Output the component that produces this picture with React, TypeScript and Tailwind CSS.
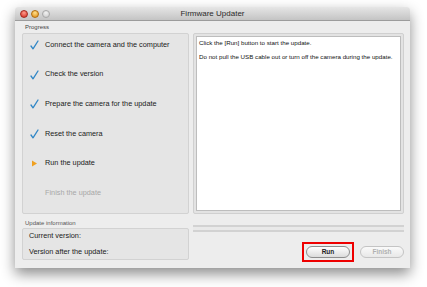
import React from 'react';

const steps = [
  { label: 'Connect the camera and the computer', state: 'done' },
  { label: 'Check the version', state: 'done' },
  { label: 'Prepare the camera for the update', state: 'done' },
  { label: 'Reset the camera', state: 'done' },
  { label: 'Run the update', state: 'current' },
  { label: 'Finish the update', state: 'pending' },
];

function Check() {
  return (
    <svg width="9" height="10" viewBox="0 0 9 10">
      <path d="M1 6 L3 8.8 L8 1" fill="none" stroke="#2f86c6" strokeWidth="1.3" strokeLinecap="round" strokeLinejoin="round" />
    </svg>
  );
}

function Arrow() {
  return (
    <svg width="9" height="9" viewBox="0 0 9 9">
      <path d="M2 1.5 L7 4.5 L2 7.5 Z" fill="#f0a020" />
    </svg>
  );
}

export default function App() {
  return (
    <div className="w-[427px] h-[287px] bg-white pt-[7px] pl-[15px] overflow-hidden" style={{ fontFamily: '"Liberation Sans", Arial, sans-serif' }}>
      <div className="w-[395px] h-[261px] flex flex-col bg-[#ededed] rounded-t-[4px] shadow-[0_6px_14px_rgba(0,0,0,0.45)]">
        {/* title bar */}
        <div className="h-[14px] flex items-center px-[5px] rounded-t-[4px] bg-gradient-to-b from-[#e6e6e6] to-[#c4c4c4] border-b border-[#9c9c9c]">
          <div className="flex gap-[3px]">
            <span className="w-[8px] h-[8px] rounded-full bg-[radial-gradient(circle_at_50%_30%,#ff9b8c,#d2291c)] border border-[#a32a20]" />
            <span className="w-[8px] h-[8px] rounded-full bg-[radial-gradient(circle_at_50%_30%,#ffe08a,#e08a10)] border border-[#b06d10]" />
            <span className="w-[8px] h-[8px] rounded-full bg-[radial-gradient(circle_at_50%_30%,#f2f2f2,#c8c8c8)] border border-[#a8a8a8]" />
          </div>
          <div className="flex-1 text-center text-[8px] text-[#2a2a2a] pr-[30px]">Firmware Updater</div>
        </div>

        <div className="flex-1 flex flex-col pl-[7px] pr-[6px]">
          <div className="h-[12px] flex items-end pb-[1px] pl-[3px] text-[6px] text-[#444]">Progress</div>
          <div className="h-[181px] flex gap-[4px]">
            <div className="w-[167px] bg-[#e5e5e5] border border-[#d2d2d2] rounded-[2px] flex flex-col gap-[15.7px] pt-[4px]">
              {steps.map((s) => (
                <div key={s.label} className="h-[14px] flex items-center pl-[7px] gap-[6px]">
                  <div className="w-[9px] flex justify-center">
                    {s.state === 'done' && <Check />}
                    {s.state === 'current' && <Arrow />}
                  </div>
                  <span className={`text-[7.3px] ${s.state === 'pending' ? 'text-[#a8a8a8]' : 'text-[#1a1a1a]'}`}>{s.label}</span>
                </div>
              ))}
            </div>
            <div className="flex-1 bg-[#e3e3e3] border border-[#d0d0d0] rounded-[2px] p-[2px]">
              <div className="h-full bg-white border border-[#bdbdbd] px-[2px] pt-[2px] text-[6.2px] text-[#111] leading-[7px]">
                <p>Click the [Run] button to start the update.</p>
                <p className="mt-[7px]">Do not pull the USB cable out or turn off the camera during the update.</p>
              </div>
            </div>
          </div>

          <div className="flex gap-[4px]">
            <div className="w-[167px] flex flex-col">
              <div className="h-[14px] flex items-end pl-[3px] text-[6px] text-[#555]">Update information</div>
              <div className="h-[32px] bg-[#e5e5e5] border border-[#d2d2d2] rounded-[2px] flex flex-col justify-center gap-[5px] pl-[6px] text-[7.3px] text-[#1a1a1a]">
                <span>Current version:</span>
                <span>Version after the update:</span>
              </div>
            </div>
            <div className="flex-1 flex flex-col">
              <div className="mt-[11px] h-[7px] border-t-2 border-b-2 border-[#d2d2d2] bg-[#e9e9e9]" />
              <div className="mt-[10px] flex justify-end items-center gap-[6px]">
                <div className="w-[52px] h-[20px] border-2 border-[#ee0000] flex items-center justify-center">
                  <button className="w-[44px] h-[12px] rounded-full border border-[#8e8e8e] bg-gradient-to-b from-white to-[#dcdcdc] text-[6.5px] font-bold text-[#222] leading-none">Run</button>
                </div>
                <button className="w-[44px] h-[12px] rounded-full border border-[#c4c4c4] bg-gradient-to-b from-[#fafafa] to-[#e8e8e8] text-[6.5px] font-bold text-[#b0b0b0] leading-none">Finish</button>
              </div>
            </div>
          </div>
        </div>
      </div>
    </div>
  );
}
